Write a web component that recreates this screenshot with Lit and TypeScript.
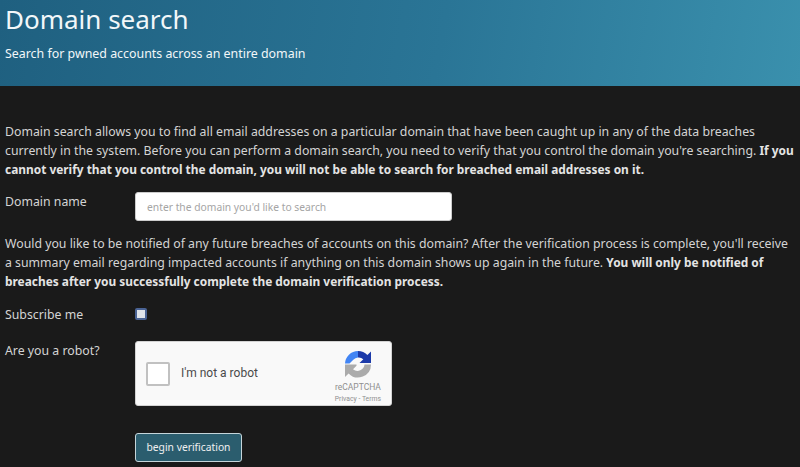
import { LitElement, html, css } from 'lit';
import { customElement } from 'lit/decorators.js';

@customElement('app-root')
export class AppRoot extends LitElement {
  static styles = css`
    :host {
      display: block;
      height: 467px;
      overflow: hidden;
      background: #1a1a1a;
      color: #d4d4d4;
      font-family: 'Noto Sans', 'Open Sans', sans-serif;
      font-size: 12.3px;
      line-height: 19px;
    }

    .hero {
      box-sizing: border-box;
      height: 86px;
      padding: 1px 5px 0;
      background: linear-gradient(100deg, #1f6080 0%, #2a7596 55%, #3a90ad 100%);
      color: #f2f7f9;
    }

    h1 {
      margin: 0;
      font-size: 26px;
      font-weight: 400;
      line-height: 36px;
    }

    .hero p {
      margin: 7px 0 0;
      font-size: 12.4px;
      line-height: 20px;
    }

    .content {
      padding: 36px 5px 0;
    }

    p {
      margin: 0;
    }

    b {
      font-size: 11.9px;
      font-weight: 700;
      color: #e4e4e4;
    }

    .row {
      display: grid;
      grid-template-columns: 130px 1fr;
      align-items: start;
    }

    .domain {
      margin-top: 13px;
    }

    input[type='text'] {
      box-sizing: border-box;
      display: block;
      width: 317px;
      height: 29px;
      padding: 0 11px;
      border: 1px solid #ccc;
      border-radius: 3px;
      background: #fff;
      font: inherit;
      font-size: 10.3px;
    }

    input::placeholder {
      color: #a5a5a5;
      opacity: 1;
    }

    .notify {
      margin-top: 13px;
    }

    .subscribe {
      margin-top: 14px;
    }

    .box {
      box-sizing: border-box;
      width: 12px;
      height: 12px;
      margin-top: 3px;
      border: 2px solid #4a6394;
      border-radius: 2px;
      background: #dfe3ea;
    }

    .robot {
      margin-top: 17px;
    }

    .captcha {
      box-sizing: border-box;
      display: flex;
      align-items: center;
      width: 257px;
      height: 65px;
      border: 1px solid #d3d3d3;
      border-radius: 3px;
      background: #f9f9f9;
      font-family: Roboto, sans-serif;
    }

    .tick {
      box-sizing: border-box;
      width: 24px;
      height: 24px;
      margin-left: 10px;
      border: 2px solid #c1c1c1;
      border-radius: 2px;
      background: #fff;
    }

    .captcha span.label {
      margin-left: 11px;
      font-size: 12px;
      color: #4a4a4a;
    }

    .brand {
      display: flex;
      flex-direction: column;
      align-items: center;
      margin-left: auto;
      margin-right: 10px;
      color: #8f8f8f;
    }

    .brand svg {
      display: block;
      width: 28px;
      height: 28px;
      margin-top: 7px;
    }

    .brand .name {
      margin-top: 3px;
      font-size: 8.5px;
      line-height: 12px;
    }

    .brand .links {
      margin-top: 1px;
      font-size: 6.8px;
      line-height: 11px;
    }

    .actions {
      margin: 27px 0 0 130px;
    }

    button {
      box-sizing: border-box;
      display: block;
      width: 107px;
      height: 29px;
      padding: 0;
      border: 1px solid #c5d5da;
      border-radius: 3px;
      background: #2b5d6e;
      color: #f0f0f0;
      font: inherit;
      font-size: 10.3px;
    }
  `;

  render() {
    return html`
      <header class="hero">
        <h1>Domain search</h1>
        <p>Search for pwned accounts across an entire domain</p>
      </header>
      <main class="content">
        <p>
          Domain search allows you to find all email addresses on a particular domain that have been caught up in any of the data breaches
          currently in the system. Before you can perform a domain search, you need to verify that you control the domain you're searching.
          <b>If you cannot verify that you control the domain, you will not be able to search for breached email addresses on it.</b>
        </p>
        <div class="row domain">
          <label>Domain name</label>
          <input type="text" placeholder="enter the domain you'd like to search" />
        </div>
        <p class="notify">
          Would you like to be notified of any future breaches of accounts on this domain? After the verification process is complete, you'll receive
          a summary email regarding impacted accounts if anything on this domain shows up again in the future.
          <b>You will only be notified of breaches after you successfully complete the domain verification process.</b>
        </p>
        <div class="row subscribe">
          <label>Subscribe me</label>
          <div class="box"></div>
        </div>
        <div class="row robot">
          <label>Are you a robot?</label>
          <div class="captcha">
            <div class="tick"></div>
            <span class="label">I'm not a robot</span>
            <div class="brand">
              <svg viewBox="0 0 28 28">
                <path d="M14 1a13 13 0 0 1 9.400 4L27 1.500V13H15.500l3.800-3.800A7 7 0 0 0 14 7.500z" fill="#1c3aa9" />
                <path d="M14 1A13 13 0 0 0 1 13.500h4.500l3.800-3.800A7 7 0 0 1 14 7.500z" fill="#4285f4" />
                <path d="M1 14.500V27l3.600-3.600A13 13 0 0 0 27 14.500h-6.500A7 7 0 0 1 9 19.200l3.500-3.500v-1.200z" fill="#ababab" />
              </svg>
              <span class="name">reCAPTCHA</span>
              <span class="links">Privacy - Terms</span>
            </div>
          </div>
        </div>
        <div class="actions">
          <button type="button">begin verification</button>
        </div>
      </main>
    `;
  }
}
